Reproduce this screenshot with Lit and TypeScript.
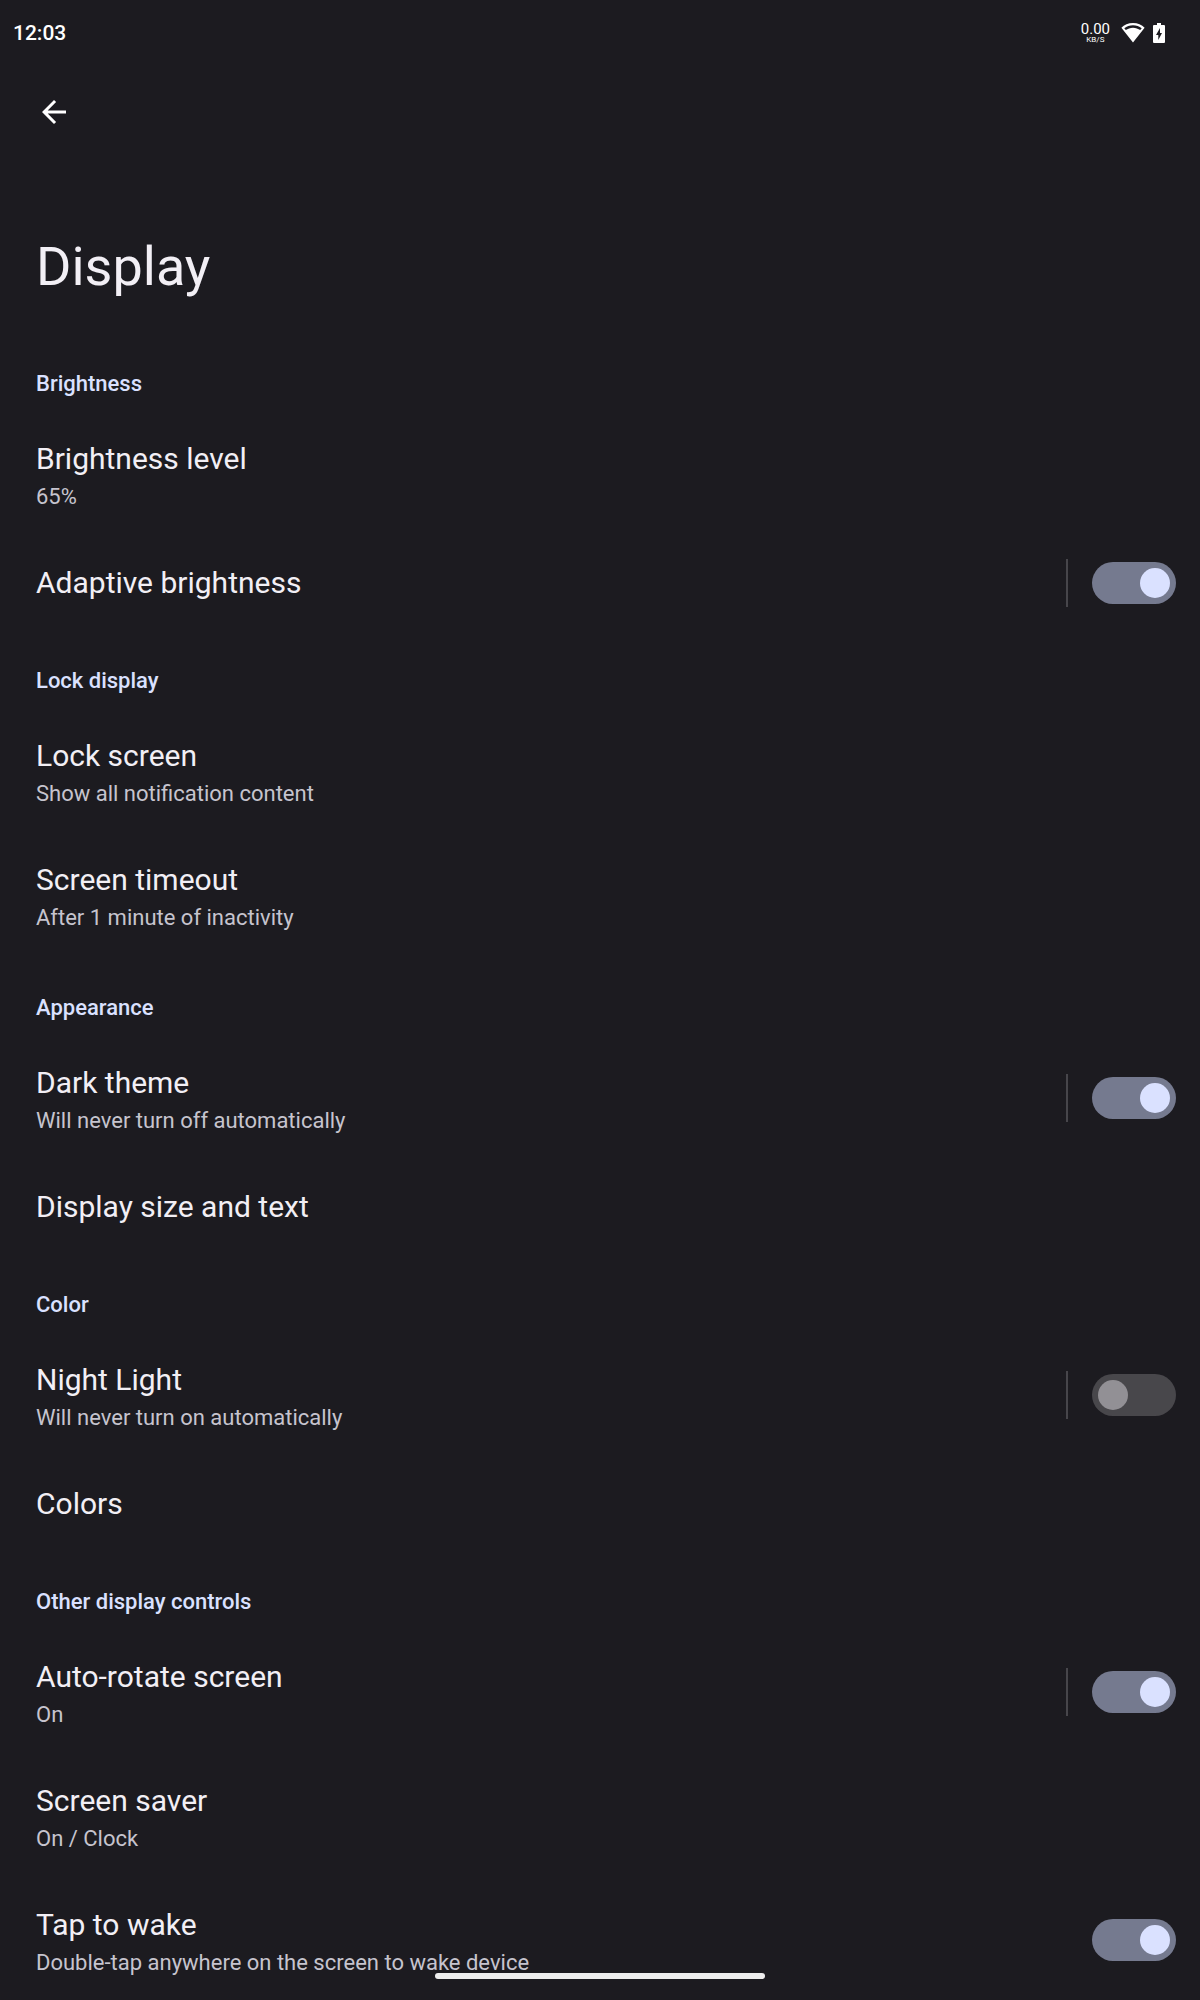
import { LitElement, html, css, nothing } from "lit";
import { customElement, property, state } from "lit/decorators.js";

interface Preference {
  id: string;
  title: string;
  summary?: string;
  toggle?: boolean;
  split?: boolean;
}

interface Category {
  title: string;
  items: Preference[];
}

const CATEGORIES: Category[] = [
  {
    title: "Brightness",
    items: [
      { id: "brightness-level", title: "Brightness level", summary: "65%" },
      { id: "adaptive", title: "Adaptive brightness", toggle: true, split: true },
    ],
  },
  {
    title: "Lock display",
    items: [
      { id: "lock-screen", title: "Lock screen", summary: "Show all notification content" },
      { id: "timeout", title: "Screen timeout", summary: "After 1 minute of inactivity" },
    ],
  },
  {
    title: "Appearance",
    items: [
      { id: "dark", title: "Dark theme", summary: "Will never turn off automatically", toggle: true, split: true },
      { id: "size", title: "Display size and text" },
    ],
  },
  {
    title: "Color",
    items: [
      { id: "night", title: "Night Light", summary: "Will never turn on automatically", toggle: false, split: true },
      { id: "colors", title: "Colors" },
    ],
  },
  {
    title: "Other display controls",
    items: [
      { id: "rotate", title: "Auto-rotate screen", summary: "On", toggle: true, split: true },
      { id: "saver", title: "Screen saver", summary: "On / Clock" },
      { id: "tap", title: "Tap to wake", summary: "Double-tap anywhere on the screen to wake device", toggle: true },
    ],
  },
];

@customElement("status-bar")
export class StatusBar extends LitElement {
  static styles = css`
    :host {
      display: flex;
      align-items: center;
      justify-content: space-between;
      height: 66px;
      padding: 0 35px 0 13px;
      color: #fff;
    }
    .clock {
      font-size: 21px;
      font-weight: 500;
      line-height: 24px;
    }
    .icons {
      display: flex;
      align-items: center;
      gap: 8px;
    }
    .speed {
      display: flex;
      flex-direction: column;
      align-items: center;
      margin-right: 3px;
      font-size: 15px;
      line-height: 14px;
    }
    .unit {
      font-size: 8px;
      line-height: 8px;
    }
    svg {
      display: block;
      fill: currentColor;
    }
  `;

  render() {
    return html`
      <span class="clock">12:03</span>
      <div class="icons">
        <div class="speed"><span>0.00</span><span class="unit">KB/S</span></div>
        <svg width="24" height="20" viewBox="0 0 24 20" role="img" aria-label="Wi-Fi">
          <path
            fill-rule="evenodd"
            d="M12 0C7.300 0 3.100 1.900 0.400 4.700L12 19.500L23.600 4.700C20.900 1.900 16.700 0 12 0ZM3.300 5.200C5.700 3.300 8.700 2.200 12 2.200C15.300 2.200 18.300 3.300 20.700 5.200L19.200 7.100C17.200 5.600 14.700 4.700 12 4.700C9.300 4.700 6.800 5.600 4.800 7.100Z"
          />
        </svg>
        <svg width="12" height="20" viewBox="0 0 12 20" role="img" aria-label="Battery charging">
          <path
            fill-rule="evenodd"
            d="M4 0H8V2H11Q12 2 12 3V19Q12 20 11 20H1Q0 20 0 19V3Q0 2 1 2H4ZM7 5L3 12H5.300V17L9 10H7Z"
          />
        </svg>
      </div>
    `;
  }
}

@customElement("preference-row")
export class PreferenceRow extends LitElement {
  @property({ attribute: false }) item!: Preference;
  @state() private checked = false;

  static styles = css`
    :host {
      display: flex;
      align-items: center;
      padding: 26px 24px 26px 36px;
    }
    .text {
      flex: 1;
      min-width: 0;
    }
    .title {
      display: block;
      color: #f2eff5;
      font-size: 30px;
      line-height: 42px;
    }
    .summary {
      display: block;
      margin-top: 4px;
      color: #c6c4ce;
      font-size: 22px;
      line-height: 26px;
    }
    .split {
      width: 2px;
      height: 48px;
      margin: -3px 24px -3px 0;
      background: #47464b;
    }
    .switch {
      appearance: none;
      display: grid;
      align-items: center;
      justify-items: start;
      box-sizing: border-box;
      width: 84px;
      height: 42px;
      margin: 0;
      padding: 6px;
      border-radius: 21px;
      background: #48474b;
    }
    .switch::before {
      content: "";
      width: 30px;
      height: 30px;
      border-radius: 50%;
      background: #929095;
    }
    .switch:checked {
      justify-items: end;
      background: #757a8f;
    }
    .switch:checked::before {
      background: #dae1ff;
    }
  `;

  willUpdate(changed: Map<string, unknown>) {
    if (changed.has("item")) this.checked = this.item.toggle ?? false;
  }

  private onChange(e: Event) {
    this.checked = (e.target as HTMLInputElement).checked;
  }

  render() {
    const { id, title, summary, toggle, split } = this.item;
    const text = html`
      <span class="title">${title}</span>
      ${summary ? html`<span class="summary">${summary}</span>` : nothing}
    `;
    if (toggle === undefined) return html`<div class="text">${text}</div>`;
    return html`
      <label class="text" for=${id}>${text}</label>
      ${split ? html`<span class="split"></span>` : nothing}
      <input class="switch" id=${id} type="checkbox" role="switch" .checked=${this.checked} @change=${this.onChange} />
    `;
  }
}

@customElement("app-root")
export class AppRoot extends LitElement {
  static styles = css`
    :host {
      display: flex;
      flex-direction: column;
      position: relative;
      height: 100vh;
      overflow: hidden;
      background: #1c1b20;
      color: #f2eff5;
      font-family: "Google Sans", Roboto, "Liberation Sans", sans-serif;
    }
    main {
      flex: 1;
      min-height: 0;
      overflow-y: auto;
      scrollbar-width: none;
    }
    .toolbar {
      display: flex;
      align-items: center;
      height: 92px;
      padding: 0 36px;
    }
    .back {
      display: flex;
      padding: 0;
      border: 0;
      background: none;
      color: #fff;
    }
    h1 {
      margin: 0;
      padding: 77px 36px 34px;
      font-size: 54px;
      font-weight: 400;
      line-height: 64px;
    }
    h2 {
      margin: 0;
      padding: 37px 36px 14px;
      color: #dae1ff;
      font-size: 22px;
      font-weight: 500;
      line-height: 28px;
    }
    .handle {
      position: absolute;
      bottom: 21px;
      left: 50%;
      width: 330px;
      height: 6px;
      margin-left: -165px;
      border-radius: 3px;
      background: #eee;
    }
  `;

  render() {
    return html`
      <status-bar></status-bar>
      <main>
        <header class="toolbar">
          <button class="back" aria-label="Navigate up">
            <svg width="36" height="36" viewBox="0 0 24 24" fill="currentColor">
              <path d="M20 11H7.800L13.400 5.400L12 4L4 12L12 20L13.400 18.600L7.800 13H20Z" />
            </svg>
          </button>
        </header>
        <h1>Display</h1>
        ${CATEGORIES.map(
          (category) => html`
            <section>
              <h2>${category.title}</h2>
              ${category.items.map((item) => html`<preference-row .item=${item}></preference-row>`)}
            </section>
          `
        )}
      </main>
      <div class="handle"></div>
    `;
  }
}
